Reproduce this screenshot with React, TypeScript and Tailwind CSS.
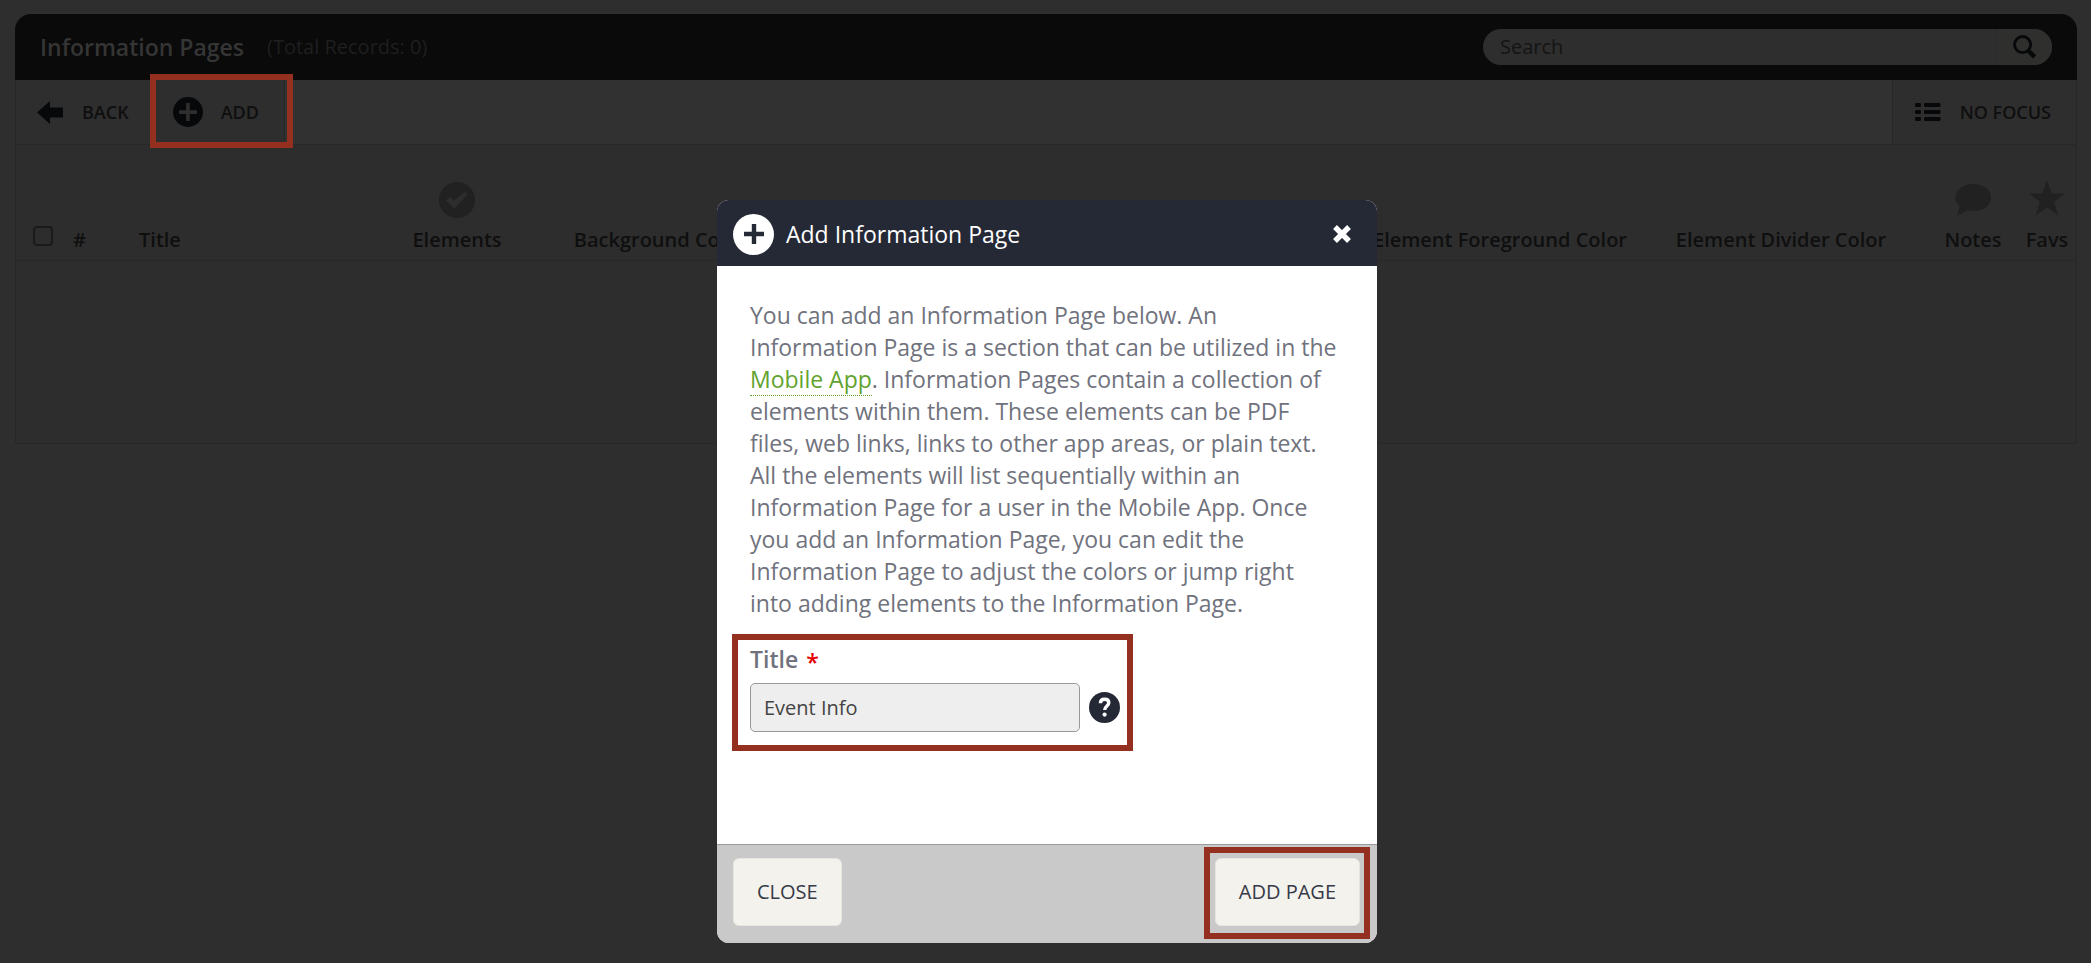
import { useState } from 'react';

interface IconProps {
    className?: string;
}

function BackIcon({ className }: IconProps) {
    return (
        <svg viewBox="0 0 26 23" className={className} fill="currentColor" aria-hidden="true">
            <path d="M0 11.5 13 0v6.5h13v10H13V23z" />
        </svg>
    );
}

function PlusCircleIcon({ className }: IconProps) {
    return (
        <svg viewBox="0 0 30 30" className={className} fill="currentColor" fillRule="evenodd" aria-hidden="true">
            <path d="M15 0a15 15 0 1 1 0 30 15 15 0 0 1 0-30zM13.1 6v7.3H6v3.6h7.1V24h3.7v-7.1H24v-3.6h-7.2V6z" />
        </svg>
    );
}

function CheckCircleIcon({ className }: IconProps) {
    return (
        <svg viewBox="0 0 36 36" className={className} fill="currentColor" fillRule="evenodd" aria-hidden="true">
            <path d="M18 0a18 18 0 1 1 0 36 18 18 0 0 1 0-36zM7 18.5l8.3 8.2L28.8 12l-2.6-2.6-10.9 9.3-4.7-3.9z" />
        </svg>
    );
}

function SearchIcon({ className }: IconProps) {
    return (
        <svg viewBox="0 0 25 25" className={className} fill="none" stroke="currentColor" aria-hidden="true">
            <circle cx="10" cy="10" r="8.4" strokeWidth="3" />
            <path d="M16 16.5l6.5 6.2" strokeWidth="4.6" />
        </svg>
    );
}

function ListIcon({ className }: IconProps) {
    return (
        <svg viewBox="0 0 26 18" className={className} fill="currentColor" aria-hidden="true">
            <rect x="0" y="0" width="6" height="4" rx="1.2" />
            <rect x="9" y="0" width="16.5" height="4" rx="1.2" />
            <rect x="0" y="7" width="6" height="4" rx="1.2" />
            <rect x="9" y="7" width="16.5" height="4" rx="1.2" />
            <rect x="0" y="14" width="6" height="4" rx="1.2" />
            <rect x="9" y="14" width="16.5" height="4" rx="1.2" />
        </svg>
    );
}

function CommentIcon({ className }: IconProps) {
    return (
        <svg viewBox="0 0 36 32" className={className} fill="currentColor" aria-hidden="true">
            <path d="M18.500 0C28.500 0 36 5.800 36 13.400S28.500 27 18.500 27c-2 0-3.900-.3-5.600-.8L2.500 31.500l2-10C1.800 19.400.5 16.700.5 13.400.5 5.800 8.500 0 18.500 0z" />
        </svg>
    );
}

function StarIcon({ className }: IconProps) {
    return (
        <svg viewBox="0 0 36 36" className={className} fill="currentColor" aria-hidden="true">
            <path d="M18 0l4.600 13.500H36L25 21.700 29.300 35.500 18 27.300 6.700 35.500 11 21.700 0 13.500h13.400z" />
        </svg>
    );
}

function CloseIcon({ className }: IconProps) {
    return (
        <svg viewBox="0 0 18 18" className={className} fill="none" stroke="currentColor" strokeWidth="5.4" aria-hidden="true">
            <path d="M2 2l14 14M16 2L2 16" />
        </svg>
    );
}

function HelpIcon({ className }: IconProps) {
    return (
        <svg viewBox="0 0 31 31" className={className} aria-hidden="true">
            <circle cx="15.500" cy="15.500" r="15.500" fill="#252936" />
            <path d="M11.400 11.300c0-2.700 1.800-4 4.200-4s4.200 1.300 4.200 3.500c0 3.300-4.100 3.100-4.100 7.200" fill="none" stroke="#fff" strokeWidth="3.400" />
            <circle cx="15.600" cy="22.600" r="2.100" fill="#fff" />
        </svg>
    );
}

export default function App() {
    const [title, setTitle] = useState('Event Info');
    const [search, setSearch] = useState('');

    return (
        <div className="min-h-screen bg-[#2e2e2e] font-['Open_Sans',sans-serif] text-[#0f0f0f] pt-[14px] pl-[15px] pr-[14px]">
            <div>
                {/* Page header */}
                <header className="flex h-[66px] items-center justify-between rounded-t-2xl bg-[#0a0a0a] pl-[25px] pr-[25px]">
                    <div className="flex items-center gap-[23px]">
                        <h1 className="text-[23px] font-semibold text-[#353535]">Information Pages</h1>
                        <span className="text-[20px] text-[#1f1f1f]">(Total Records: 0)</span>
                    </div>
                    <form
                        className="flex h-9 w-[569px] overflow-hidden rounded-full bg-[#2e2e2e]"
                        onSubmit={(e) => e.preventDefault()}
                    >
                        <input
                            type="text"
                            aria-label="Search"
                            placeholder="Search"
                            value={search}
                            onChange={(e) => setSearch(e.target.value)}
                            className="min-w-0 flex-1 pl-[17px] text-[20px] placeholder:text-[#141414] focus:outline-none"
                        />
                        <button
                            type="submit"
                            aria-label="Search"
                            className="flex w-14 items-center justify-center border-l border-[#2a2a2a] bg-[#2f2f2d]"
                        >
                            <SearchIcon className="h-6 w-6 text-[#06080a]" />
                        </button>
                    </form>
                </header>

                {/* Toolbar */}
                <div className="flex h-[65px] items-stretch border-x border-b border-[#282828] bg-[#313131] text-[18px] font-semibold">
                    <button type="button" className="flex items-center gap-[19px] bg-[#2e2e2e] pl-[21px] pr-[23px]">
                        <BackIcon className="h-[23px] w-[26px] text-[#06080a]" />
                        BACK
                    </button>
                    <div className="relative flex">
                        <button type="button" className="flex items-center gap-[18px] border-r border-[#272727] bg-[#2e2e2e] pl-[21px] pr-[25px]">
                            <PlusCircleIcon className="h-[30px] w-[30px] text-[#06080a]" />
                            ADD
                        </button>
                        <span className="pointer-events-none absolute -top-[6px] -bottom-[4px] -left-[2px] -right-[8px] border-[6px] border-[#933020]" />
                    </div>
                    <button type="button" className="ml-auto flex items-center gap-[19px] border-l border-[#282828] bg-[#2e2e2e] pl-[22px] pr-[25px]">
                        <ListIcon className="h-[18px] w-[26px] text-[#06080a]" />
                        NO FOCUS
                    </button>
                </div>

                {/* Records */}
                <div className="min-h-[299px] border-x border-b border-[#282828] bg-[#2d2d2d]">
                    <table className="w-full table-fixed text-[20px] leading-7">
                        <colgroup>
                            <col className="w-[48px]" />
                            <col className="w-[62px]" />
                            <col className="w-[230px]" />
                            <col className="w-[202px]" />
                            <col className="w-[204px]" />
                            <col />
                            <col className="w-[268px]" />
                            <col className="w-[294px]" />
                            <col className="w-[90px]" />
                            <col className="w-[58px]" />
                        </colgroup>
                        <thead>
                            <tr className="h-[115px] border-b border-[#282828] align-bottom [&>th]:pb-[6px] [&>th]:font-semibold [&>th]:whitespace-nowrap">
                                <th className="text-left">
                                    <input
                                        type="checkbox"
                                        aria-label="Select all"
                                        className="ml-[17px] mb-2 block h-5 w-5 appearance-none rounded border-2 border-[#1a1a1a]"
                                    />
                                </th>
                                <th className="pl-[9px] text-left">#</th>
                                <th className="pl-[13px] text-left">Title</th>
                                <th>
                                    <CheckCircleIcon className="mx-auto mb-2 h-9 w-9 text-[#212121]" />
                                    Elements
                                </th>
                                <th>Background Color</th>
                                <th />
                                <th>Element Foreground Color</th>
                                <th>Element Divider Color</th>
                                <th>
                                    <CommentIcon className="mx-auto mb-[10px] h-8 w-9 text-[#212121]" />
                                    Notes
                                </th>
                                <th>
                                    <StarIcon className="mx-auto mb-[10px] h-9 w-9 text-[#212121]" />
                                    Favs
                                </th>
                            </tr>
                        </thead>
                    </table>
                </div>
            </div>

            {/* Add dialog */}
            <div className="fixed inset-0 flex items-start justify-center pt-[200px] pl-[3px]">
                <form
                    role="dialog"
                    aria-labelledby="dialog-title"
                    className="w-[660px] overflow-hidden rounded-xl bg-white"
                    onSubmit={(e) => e.preventDefault()}
                >
                    <div className="flex h-[66px] items-center bg-[#252936] pl-4 pr-[26px] pt-0.5 text-white">
                        <span className="mr-3 flex h-[41px] w-[41px] items-center justify-center rounded-full bg-white">
                            <svg viewBox="0 0 20 20" className="h-5 w-5" stroke="#252936" strokeWidth="4.400" aria-hidden="true">
                                <path d="M10 0v20M0 10h20" />
                            </svg>
                        </span>
                        <h2 id="dialog-title" className="text-[23px] font-medium">Add Information Page</h2>
                        <button type="button" aria-label="Close dialog" className="ml-auto">
                            <CloseIcon className="h-[18px] w-[18px]" />
                        </button>
                    </div>

                    <div className="h-[578px] px-[33px] pt-[33px]">
                        <p className="pr-1.5 text-[23px] leading-8 text-[#70727d]">
                            You can add an Information Page below. An Information Page is a section that can be utilized in the{' '}
                            <a href="#mobile-app" className="border-b border-dotted border-[#61a32e] text-[#61a32e]">Mobile App</a>. Information
                            Pages contain a collection of elements within them. These elements can be PDF files, web links, links to other app
                            areas, or plain text. All the elements will list sequentially within an Information Page for a user in the Mobile App.
                            Once you add an Information Page, you can edit the Information Page to adjust the colors or jump right into adding
                            elements to the Information Page.
                        </p>

                        <div className="relative mt-6 w-fit">
                            <label htmlFor="title" className="flex h-8 items-center gap-2 text-[23px] font-semibold text-[#70727d]">
                                Title <span className="pt-1.5 text-[#e60000]">*</span>
                            </label>
                            <div className="mt-2 flex items-center gap-[9px]">
                                <input
                                    id="title"
                                    type="text"
                                    value={title}
                                    onChange={(e) => setTitle(e.target.value)}
                                    className="h-[49px] w-[330px] rounded-[5px] border border-[#999999] bg-[#eeeeee] px-[13px] text-[20px] text-[#444444] focus:outline-none"
                                />
                                <button type="button" aria-label="Help">
                                    <HelpIcon className="h-[31px] w-[31px]" />
                                </button>
                            </div>
                            <span className="pointer-events-none absolute -top-[9px] -bottom-[19px] -left-[18px] -right-[13px] border-[6px] border-[#933020]" />
                        </div>
                    </div>

                    {/* Dialog actions */}
                    <div className="flex h-[99px] justify-between border-t border-[#9a9a9a] bg-[#c9c9c9] pl-4 pr-[17px] pt-[13px] text-[20px] text-[#363a48]">
                        <button type="button" className="h-[68px] rounded-md border border-[#e6e5de] bg-[#f3f2ec] px-[23px]">
                            CLOSE
                        </button>
                        <div className="relative h-[68px]">
                            <button type="submit" className="h-full rounded-md border border-[#e6e5de] bg-[#f3f2ec] px-[23px]">
                                ADD PAGE
                            </button>
                            <span className="pointer-events-none absolute -top-[11px] -bottom-[13px] -left-[11px] -right-[10px] border-[6px] border-[#933020]" />
                        </div>
                    </div>
                </form>
            </div>
        </div>
    );
}
